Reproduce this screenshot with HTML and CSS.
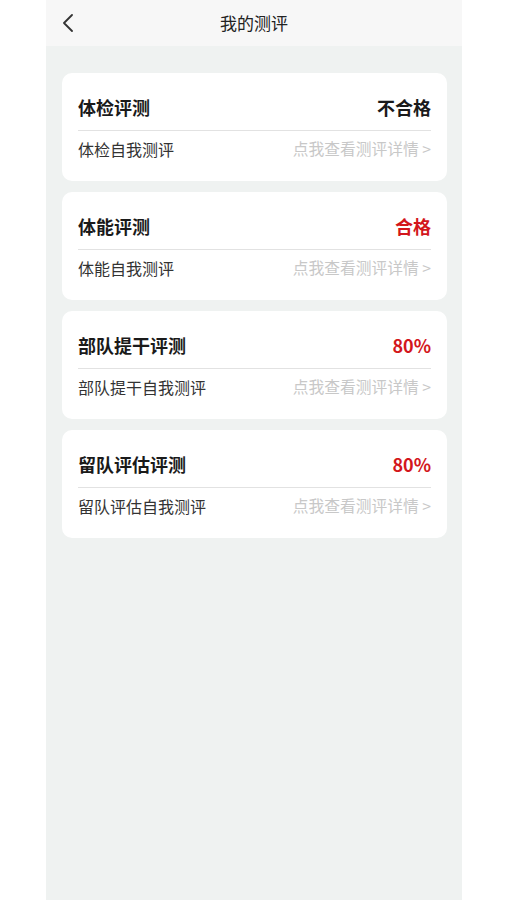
FILE: index.html
```html
<!DOCTYPE html>
<html lang="zh-CN">
<head>
    <meta charset="UTF-8">
    <meta name="viewport" content="width=device-width, initial-scale=1.0">
    <title>我的测评</title>
    <link rel="stylesheet" href="styles.css">
</head>
<body>
    <div class="phone">
        <div class="nav-bar">
            <span class="back">
                <svg width="12" height="18" viewBox="0 0 12 18">
                    <path d="M10 1 L2 9 L10 17" fill="none" stroke="#333" stroke-width="1.8" stroke-linecap="round" stroke-linejoin="round"/>
                </svg>
            </span>
            <span class="nav-title">我的测评</span>
        </div>

        <div class="list">
            <div class="card">
                <div class="card-head">
                    <span class="card-title">体检评测</span>
                    <span class="card-result">不合格</span>
                </div>
                <div class="card-row">
                    <span>体检自我测评</span>
                    <span class="more">点我查看测评详情 &gt;</span>
                </div>
            </div>

            <div class="card">
                <div class="card-head">
                    <span class="card-title">体能评测</span>
                    <span class="card-result red">合格</span>
                </div>
                <div class="card-row">
                    <span>体能自我测评</span>
                    <span class="more">点我查看测评详情 &gt;</span>
                </div>
            </div>

            <div class="card">
                <div class="card-head">
                    <span class="card-title">部队提干评测</span>
                    <span class="card-result red">80%</span>
                </div>
                <div class="card-row">
                    <span>部队提干自我测评</span>
                    <span class="more">点我查看测评详情 &gt;</span>
                </div>
            </div>

            <div class="card">
                <div class="card-head">
                    <span class="card-title">留队评估评测</span>
                    <span class="card-result red">80%</span>
                </div>
                <div class="card-row">
                    <span>留队评估自我测评</span>
                    <span class="more">点我查看测评详情 &gt;</span>
                </div>
            </div>
        </div>
    </div>
</body>
</html>
```

FILE: styles.css
```css
body {
    margin: 0;
    background-color: #fff;
    font-family: 'Noto Sans CJK SC', 'Liberation Sans', sans-serif;
    color: #333;
}
.phone {
    width: 416px;
    min-height: 900px;
    margin-left: 46px;
    background-color: #eff2f1;
}
.nav-bar {
    height: 46px;
    display: flex;
    align-items: center;
    justify-content: center;
    position: relative;
    background-color: #f7f7f7;
}
.back {
    position: absolute;
    left: 16px;
    top: 13px;
}
.nav-title {
    font-size: 17px;
    color: #222;
    margin-top: -2px;
}
.list {
    padding: 27px 15px 0 16px;
    display: flex;
    flex-direction: column;
    gap: 11px;
}
.card {
    background-color: #fff;
    border-radius: 10px;
    padding: 21px 16px 21px;
}
.card-head {
    display: flex;
    justify-content: space-between;
    align-items: center;
    line-height: 26px;
    padding-bottom: 10px;
    border-bottom: 1px solid #e2e2e2;
}
.card-title {
    font-size: 18px;
    font-weight: bold;
    color: #1a1a1a;
}
.card-result {
    font-size: 18px;
    font-weight: bold;
    color: #1a1a1a;
}
.card-result.red {
    color: #d3161c;
}
.card-row {
    display: flex;
    justify-content: space-between;
    align-items: center;
    margin-top: 7px;
    line-height: 22px;
    font-size: 16px;
    color: #333;
}
.more {
    color: #c8c8c8;
    font-size: 15.75px;
}
```
